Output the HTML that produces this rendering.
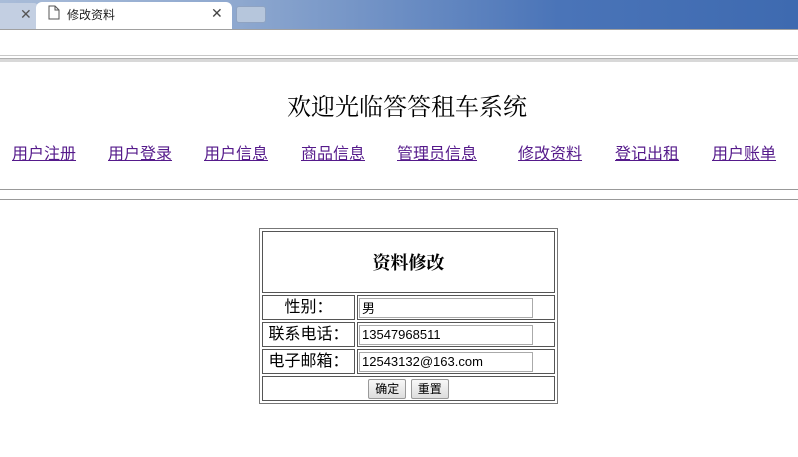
<!DOCTYPE html>
<html><head><meta charset="utf-8"><style>
body{margin:0;width:798px;height:457px;overflow:hidden;background:#fff;position:relative;font-family:"Liberation Serif","Noto Serif CJK SC",serif;}
.abs{position:absolute}
.top{left:0;top:0;width:798px;height:29px;background:linear-gradient(90deg,#a9bcd8 0%,#8ea8cf 30%,#4a74b8 70%,#3e6ab0 100%);}
.tab0{left:-10px;top:3px;width:48px;height:26px;background:#c3cfe2;border-radius:4px 4px 0 0}
.tab{left:36px;top:2px;width:196px;height:27px;background:#fff;border-radius:6px 6px 0 0}
.tab2{left:236px;top:6px;width:28px;height:15px;background:#b6c6dc;border-radius:3px;border:1px solid #8fa3c2}
.nav a{position:absolute;top:140px;font-size:16px;color:#551a8b;text-decoration:underline;font-family:"Liberation Sans","Noto Sans CJK SC",sans-serif;white-space:nowrap}
table{border-collapse:separate}
td{border:1px solid #555;font-family:"Liberation Sans","Noto Sans CJK SC",sans-serif;font-size:16px;padding:0}
input[type=text]{font-family:"Liberation Sans",sans-serif;font-size:13px;border:1px solid #aaa;width:174px;height:20px;padding:0 2px;box-sizing:border-box;margin:1px}
button{font-family:"Liberation Sans","Noto Sans CJK SC",sans-serif;font-size:12px;height:20px;padding:0 6px;border:1px solid #999;background:linear-gradient(#f8f8f8,#ddd);border-radius:2px}
</style></head><body>
<div class="abs top"></div>
<div class="abs tab0"></div>
<div class="abs" style="left:20px;top:6px;font-size:14px;color:#555;font-family:'Liberation Sans',sans-serif">✕</div>
<div class="abs tab"></div>
<svg class="abs" style="left:48px;top:5px" width="12" height="15"><path d="M1 1H7L11 5V14H1Z M7 1V5H11" fill="#fff" stroke="#555"/></svg>
<div class="abs" style="left:67px;top:6px;font-size:12px;color:#222;font-family:'Liberation Sans','Noto Sans CJK SC',sans-serif">修改资料</div>
<div class="abs" style="left:211px;top:5px;font-size:14px;color:#444;font-family:'Liberation Sans',sans-serif">✕</div>
<div class="abs tab2"></div>
<div class="abs" style="left:0;top:29px;width:798px;height:1px;background:#a0a0a0"></div>
<div class="abs" style="left:0;top:55px;width:798px;height:1px;background:#c8c8c8"></div>
<div class="abs" style="left:0;top:58px;width:798px;height:3px;background:#d8d8d8;border-top:1px solid #b0b0b0"></div>
<div class="abs" style="left:0;top:87px;width:814px;text-align:center;font-size:24px;color:#000">欢迎光临答答租车系统</div>
<div class="nav">
<a style="left:12px">用户注册</a><a style="left:108px">用户登录</a><a style="left:204px">用户信息</a><a style="left:301px">商品信息</a><a style="left:397px">管理员信息</a><a style="left:518px">修改资料</a><a style="left:615px">登记出租</a><a style="left:712px">用户账单</a>
</div>
<div class="abs" style="left:0;top:189px;width:798px;height:1px;background:#999"></div>
<div class="abs" style="left:0;top:199px;width:798px;height:1px;background:#999"></div>
<table class="abs" style="left:259px;top:228px;width:299px;border:1px solid #777;border-spacing:2px">
<tr><td colspan="2" style="height:60px;text-align:center;font-size:18px;font-weight:bold;font-family:'Liberation Serif','Noto Serif CJK SC',serif">资料修改</td></tr>
<tr><td style="width:91px;height:23px;text-align:center;line-height:20px">性别：</td><td style="height:23px"><input type="text" value="男"></td></tr>
<tr><td style="height:23px;text-align:center;line-height:20px">联系电话：</td><td style="height:23px"><input type="text" value="13547968511"></td></tr>
<tr><td style="height:23px;text-align:center;line-height:20px">电子邮箱：</td><td style="height:23px"><input type="text" value="12543132@163.com"></td></tr>
<tr><td colspan="2" style="height:23px;text-align:center"><button>确定</button> <button>重置</button></td></tr>
</table>
</body></html>
